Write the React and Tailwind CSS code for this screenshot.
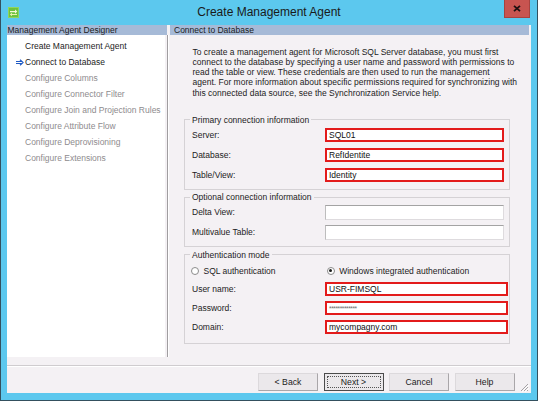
import React from 'react';

const steps = [
  { label: 'Create Management Agent', done: true },
  { label: 'Connect to Database', done: true, current: true },
  { label: 'Configure Columns' },
  { label: 'Configure Connector Filter' },
  { label: 'Configure Join and Projection Rules' },
  { label: 'Configure Attribute Flow' },
  { label: 'Configure Deprovisioning' },
  { label: 'Configure Extensions' },
];

const intro = [
  'To create a management agent for Microsoft SQL Server database, you must first',
  'connect to the database by specifying a user name and password with permissions to',
  'read the table or view. These credentials are then used to run the management',
  'agent. For more information about specific permissions required for synchronizing with',
  'this connected data source, see the Synchronization Service help.',
];

const AppIcon = () => (
  <svg width="11" height="11" viewBox="0 0 11 11">
    <rect x="0" y="0" width="11" height="11" fill="#4fa52c" />
    <rect x="0.5" y="0.5" width="10" height="10" fill="#6cc23d" stroke="#8fd65e" strokeWidth="1" />
    <path d="M2 4 H7 V2.5 L9.3 4.6 L7 6.7 V5.2 H2 Z" fill="#f4f7d8" />
    <path d="M9 7 H4 V5.8 L1.8 7.5 L4 9.2 V8.1 H9 Z" fill="#e9f1b0" />
  </svg>
);

const StepArrow = () => (
  <svg width="8" height="7" viewBox="0 0 8 7">
    <path d="M0 2.5 H5.5 M0 4.5 H5.5 M4 0.8 L7 3.5 L4 6.2" stroke="#1f5ac4" strokeWidth="1.2" fill="none" />
  </svg>
);

const Field = ({ label, value, red, h = 'h-[14px]', w = 'w-[179px]', secret }) => (
  <div className={`flex items-center ${h}`}>
    <div className="flex-1 text-[8.5px] leading-[10px] text-[#1c1c1c]">{label}</div>
    <div
      className={`${w} h-full bg-white flex items-center pl-[2px] ${
        red
          ? 'border-2 border-[#e31b1b]'
          : 'border border-[#dedbde] border-t-[#a3a3a3] border-l-[#bdbdbd]'
      }`}
    >
      {secret ? (
        <span className="text-[6.5px] leading-[7px] text-[#6b6b6b] tracking-[-0.4px]">*************</span>
      ) : (
        <span className="text-[8.5px] leading-[10px] text-[#111]">{value}</span>
      )}
    </div>
  </div>
);

const Radio = ({ checked, label }) => (
  <div className="flex items-center">
    <div className="w-[8px] h-[8px] rounded-full border border-[#8c8c8c] bg-white flex items-center justify-center">
      {checked && <div className="w-[3px] h-[3px] rounded-full bg-[#1a1a1a]" />}
    </div>
    <span className="ml-[4.5px] text-[8.5px] leading-[10px] text-[#1c1c1c]">{label}</span>
  </div>
);

const Legend = ({ children }) => (
  <legend className="-ml-[2px] px-[2px] text-[8.5px] leading-[10px] text-[#1c1c1c]">{children}</legend>
);

const Button = ({ children, primary }) => (
  <div
    className={`w-[60px] h-[18px] flex items-center justify-center bg-[#ebe8eb] text-[8.7px] leading-[10px] text-[#1c1c1c] ${
      primary
        ? 'border border-[#4b4b4b] p-[2px]'
        : 'border border-[#a9a6a9] border-t-[#dcd9dc] border-l-[#dcd9dc]'
    }`}
  >
    {primary ? (
      <div className="w-full h-full flex items-center justify-center border border-dotted border-[#555]">{children}</div>
    ) : (
      children
    )}
  </div>
);

export default function App() {
  return (
    <div className="w-[540px] h-[405px] bg-white font-['Liberation_Sans',Arial,sans-serif] overflow-hidden">
      <div className="w-[538px] h-[401px] bg-[#5cc8ee] border-x border-b border-[#34505e] flex flex-col px-[6px] pb-[7px]">
        {/* title bar */}
        <div className="h-[25px] -mx-[6px] grid grid-cols-[1fr_auto_1fr]">
          <div className="pl-[7px] pt-[6.5px]">
            <AppIcon />
          </div>
          <div className="flex items-center pb-[1px] text-[12px] text-[#1a1a1a]">Create Management Agent</div>
          <div className="flex justify-end items-start pr-[7px]">
            <div className="w-[26px] h-[17.5px] bg-[#c85450] border-x border-b border-[#a7423f] flex items-center justify-center">
              <svg width="8" height="7" viewBox="0 0 8 7">
                <path d="M1 0.8 L7 6.2 M7 0.8 L1 6.2" stroke="#1e1010" strokeWidth="1.8" />
              </svg>
            </div>
          </div>
        </div>

        {/* client area */}
        <div className="flex-1 bg-[#f4f1f4] flex flex-col relative">
          <div className="h-[332px] flex">
            {/* left: designer steps */}
            <div className="w-[160px] flex flex-col">
              <div className="h-[10px] bg-[#a6bad7] text-[8.5px] leading-[10px] text-[#1c1c1c] pl-[0.5px]">
                Management Agent Designer
              </div>
              <div className="flex-1 flex">
                <div className="w-[158px] bg-white pt-[3px] flex flex-col">
                  {steps.map((s) => (
                    <div key={s.label} className="h-[16px] flex items-center">
                      <div className="w-[18px] pl-[9px] flex items-center">{s.current && <StepArrow />}</div>
                      <span
                        className={`text-[8.5px] leading-[10px] whitespace-nowrap ${
                          s.done ? 'text-[#1c1c1c]' : 'text-[#8e8b8e]'
                        }`}
                      >
                        {s.label}
                      </span>
                    </div>
                  ))}
                </div>
              </div>
            </div>

            {/* divider */}
            <div className="w-[3px] flex flex-col">
              <div className="h-[10px]" />
              <div className="flex-1 flex">
                <div className="w-[1px] bg-[#a09da0]" />
                <div className="w-[1px] bg-white" />
              </div>
            </div>

            {/* right: connect to database */}
            <div className="w-[359px] flex flex-col">
              <div className="h-[10px] bg-[#a6bad7] text-[8.5px] leading-[10px] text-[#1c1c1c] pl-[4px]">
                Connect to Database
              </div>
              <div className="flex-1 flex flex-col">
                <p className="mt-[11.5px] ml-[22.5px] text-[8.5px] leading-[10.25px] text-[#1c1c1c] whitespace-nowrap">
                  {intro.map((line) => (
                    <span key={line} className="block">
                      {line}
                    </span>
                  ))}
                </p>

                <fieldset className="mt-[17px] ml-[14px] w-[326px] border border-[#d5d2d5] pl-[7px] pr-[5px] pt-[3px] pb-[7px]">
                  <Legend>Primary connection information</Legend>
                  <div className="flex flex-col gap-[6px]">
                    <Field label="Server:" value="SQL01" red />
                    <Field label="Database:" value="RefIdentite" red />
                    <Field label="Table/View:" value="Identity" red />
                  </div>
                </fieldset>

                <fieldset className="mt-[2.5px] ml-[14px] w-[326px] border border-[#d5d2d5] pl-[7px] pr-[5px] pt-[2.3px] pb-[6px]">
                  <Legend>Optional connection information</Legend>
                  <div className="flex flex-col gap-[5px]">
                    <Field label="Delta View:" h="h-[15px]" />
                    <Field label="Multivalue Table:" h="h-[15px]" />
                  </div>
                </fieldset>

                <fieldset className="mt-[3px] ml-[14px] w-[326px] border border-[#d5d2d5] pl-[7px] pr-[1px] pt-[5px] pb-[9px]">
                  <Legend>Authentication mode</Legend>
                  <div className="flex flex-col">
                    <div className="h-[12px] flex items-center">
                      <div className="flex-1 -ml-[1px]">
                        <Radio label="SQL authentication" />
                      </div>
                      <div className="w-[183px] pl-[1.7px]">
                        <Radio checked label="Windows integrated authentication" />
                      </div>
                    </div>
                    <div className="mt-[5.5px] flex flex-col gap-[5px]">
                      <Field label="User name:" value="USR-FIMSQL" red w="w-[183px]" />
                      <Field label="Password:" red secret w="w-[183px]" />
                      <Field label="Domain:" value="mycompagny.com" red w="w-[183px]" />
                    </div>
                  </div>
                </fieldset>
              </div>
            </div>
          </div>

          {/* separator */}
          <div className="mt-[8px] h-[2px] flex flex-col">
            <div className="h-[1px] bg-[#cfcccf]" />
            <div className="h-[1px] bg-white" />
          </div>

          {/* buttons */}
          <div className="mt-[5.5px] flex justify-end gap-[5.5px] pr-[16.5px]">
            <Button>{'<'} Back</Button>
            <Button primary>Next {'>'}</Button>
            <Button>Cancel</Button>
            <Button>Help</Button>
          </div>

          {/* size grip */}
          <svg className="absolute right-[2px] bottom-[1px]" width="9" height="9" viewBox="0 0 9 9">
            <path d="M8 1 L1 8 M8 4 L4 8 M8 7 L7 8" stroke="#a5a2a5" strokeWidth="1" />
            <path d="M9 2 L2 9 M9 5 L5 9" stroke="#ffffff" strokeWidth="1" />
          </svg>
        </div>
      </div>
    </div>
  );
}
